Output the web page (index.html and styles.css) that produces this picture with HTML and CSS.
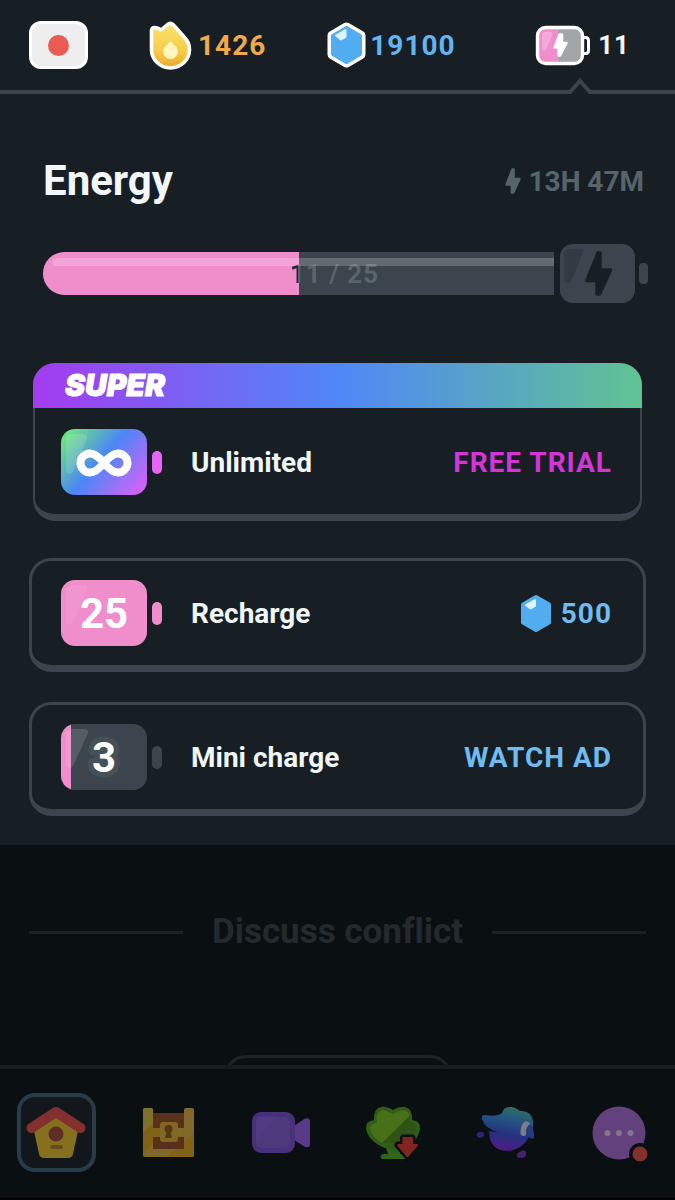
FILE: index.html
```
<!DOCTYPE html>
<html lang="en">
  <head>
    <title>Energy</title>
    <meta charset="utf-8"/>
    <meta name="viewport" content="width=device-width, initial-scale=1.0"/>
    <link rel="stylesheet" href="styles.css">
  </head>
  <body>
    <header class="topbar">
      <button class="flag" aria-label="Japanese course"><span class="sun"></span></button>
      <button class="stat streak">
        <svg width="43" height="49" viewBox="0 0 43 49" aria-hidden="true">
          <defs>
            <linearGradient id="flame" x1="0" y1="0" x2="0" y2="1">
              <stop offset="0" stop-color="#fbe36b"/>
              <stop offset=".6" stop-color="#f6cd4c"/>
              <stop offset="1" stop-color="#e9a92f"/>
            </linearGradient>
          </defs>
          <path d="M2.500 10Q2.500 6.500 6 6.500Q9 6.500 12 9L18.500 3.500Q21.500 1 24.500 4L36 17Q40.500 22 40.500 28.500A19 18.500 0 0 1 2.500 28.500Z" fill="url(#flame)" stroke="#fff" stroke-width="3.600" stroke-linejoin="round"/>
          <path d="M21.500 20.500Q23 21 24.500 23.500Q29 26 29 30.500A7.500 7.500 0 0 1 14 30.500Q14 26 18.500 23.500Q20 21 21.500 20.500Z" fill="#fff6bd"/>
        </svg>
        1426
      </button>
      <button class="stat gems">
        <svg width="39" height="46" viewBox="0 0 39 46" aria-hidden="true">
          <path d="M19.500 5L34 13.500V32.500L19.500 41L5 32.500V13.500Z" fill="#fff" stroke="#fff" stroke-width="9" stroke-linejoin="round"/>
          <path d="M19.500 6L33 14V32L19.500 40L6 32V14Z" fill="#52adf0" stroke="#52adf0" stroke-width="4" stroke-linejoin="round"/>
          <path d="M9 13.500L18.500 8V15L14 17.500Z" fill="#dff3ff" stroke="#dff3ff" stroke-width="2" stroke-linejoin="round"/>
        </svg>
        19100
      </button>
      <button class="stat charge">
        <svg width="55" height="39" viewBox="0 0 55 39" aria-hidden="true">
          <path d="M46 11.500h3.500q3 0 3 3v10q0 3-3 3H46" fill="none" stroke="#fff" stroke-width="3"/>
          <rect x="1.500" y="1.500" width="45" height="36" rx="8" fill="#a2a6a6"/>
          <path d="M22 1.500H9.500a8 8 0 0 0-8 8v20a8 8 0 0 0 8 8H22Z" fill="#f08dcb"/>
          <path d="M6 9q0-3 3-3h6q2 0 1.500 2L11 22q-2 4-4 2q-1-1-1-2Z" fill="#f5a9da"/>
          <rect x="1.500" y="1.500" width="45" height="36" rx="8" fill="none" stroke="#fff" stroke-width="3.400"/>
          <path d="M23.500 8.500h2.500v8.500h4.500L24 29.500h-1.500V21.500H18.500Z" fill="#fff" stroke="#fff" stroke-width="2.500" stroke-linejoin="round"/>
        </svg>
        11
      </button>
      <svg class="caret" width="26" height="17" viewBox="0 0 26 17" aria-hidden="true">
        <path d="M2 16L13 4L24 16V17H2Z" fill="#171f25"/>
        <path d="M0 15H3L13 4L23 15H26" fill="none" stroke="#3c444b" stroke-width="4"/>
      </svg>
    </header>

    <main class="energy">
      <div class="heading">
        <h1>Energy</h1>
        <p class="timer">
          <svg width="16" height="26" viewBox="0 0 27 44" aria-hidden="true">
            <path d="M12.500 2.500h2v16h10L14 41.500h-2.500V28H2.500Z" fill="#56656b" stroke="#56656b" stroke-width="4" stroke-linejoin="round"/>
          </svg>
          13H 47M
        </p>
      </div>

      <div class="meter" role="progressbar" aria-label="Energy" aria-valuemin="0" aria-valuemax="25" aria-valuenow="11">
        <div class="track">
          <div class="fill"></div>
          <span class="count">11 / 25</span>
          <div class="shine"></div>
        </div>
        <svg width="88" height="59" viewBox="0 0 88 59" aria-hidden="true">
          <rect x="0" y="0" width="75" height="59" rx="13" fill="#3c454d"/>
          <path d="M4 10q0-5 5-5h12q3 0 2 3L12 36q-2 5-6 3q-2-1-2-3Z" fill="#323b43"/>
          <path d="M38 9h2v17h10.500L39.500 50H37V36.500H27Z" fill="#171f25" stroke="#171f25" stroke-width="3.500" stroke-linejoin="round"/>
          <rect x="79" y="19" width="9" height="21" rx="4" fill="#3c454d"/>
        </svg>
      </div>

      <div class="offers">
        <button class="offer super">
          <span class="banner">SUPER</span>
          <span class="row">
            <svg width="101" height="66" viewBox="0 0 101 66" aria-hidden="true">
              <defs>
                <linearGradient id="unlimited" gradientUnits="userSpaceOnUse" x1="8" y1="4" x2="78" y2="64">
                  <stop offset="0" stop-color="#6ce283"/>
                  <stop offset=".45" stop-color="#4b87f6"/>
                  <stop offset="1" stop-color="#d462f6"/>
                </linearGradient>
              </defs>
              <rect width="86" height="66" rx="14" fill="url(#unlimited)"/>
              <path d="M5 11q0-6 6-6h11q5 0 4 5L13 40q-2 5-5 5q-3 0-3-4Z" fill="#fff" opacity=".14"/>
              <path d="M43 34C38 28 34 24.500 29 24.500a9.500 9.500 0 0 0 0 19C34 43.500 38 40 43 34C48 28 52 24.500 57 24.500a9.500 9.500 0 0 1 0 19C52 43.500 48 40 43 34Z" fill="none" stroke="#fff" stroke-width="8" stroke-linejoin="round"/>
              <rect x="91" y="22" width="10" height="23" rx="5" fill="#e765f5"/>
            </svg>
            <span class="name">Unlimited</span>
            <span class="price trial">FREE TRIAL</span>
          </span>
        </button>

        <button class="offer">
          <span class="row">
            <svg width="101" height="66" viewBox="0 0 101 66" aria-hidden="true">
              <rect width="86" height="66" rx="14" fill="#f08dcb"/>
              <path d="M5 11q0-6 6-6h11q5 0 4 5L13 40q-2 5-5 5q-3 0-3-4Z" fill="#fff" opacity=".08"/>
              <text class="amount" x="43" y="48">25</text>
              <rect x="91" y="22" width="10" height="23" rx="5" fill="#f08dcb"/>
            </svg>
            <span class="name">Recharge</span>
            <span class="price">
              <svg width="30" height="37" viewBox="0 0 30 37" aria-hidden="true">
                <path d="M15 2L28 9.500V27.500L15 35L2 27.500V9.500Z" fill="#52adf0" stroke="#52adf0" stroke-width="4" stroke-linejoin="round"/>
                <path d="M5 10L14 5V11L9.500 13.500Z" fill="#dff3ff" stroke="#dff3ff" stroke-width="2" stroke-linejoin="round"/>
              </svg>
              500
            </span>
          </span>
        </button>

        <button class="offer">
          <span class="row">
            <svg width="101" height="66" viewBox="0 0 101 66" aria-hidden="true">
              <rect width="86" height="66" rx="14" fill="#3c454d"/>
              <path d="M10 .600A14 14 0 0 0 0 14V52A14 14 0 0 0 10 65.400Z" fill="#f08dcb"/>
              <path d="M5 11q0-6 6-6h12q5 0 4 4L13 40q-2 5-5 4q-3-1-3-4Z" fill="#fff" opacity=".13"/>
              <text class="amount halo" x="43" y="48">3</text>
              <rect x="91" y="22" width="10" height="23" rx="5" fill="#3c454d"/>
            </svg>
            <span class="name">Mini charge</span>
            <span class="price">WATCH AD</span>
          </span>
        </button>
      </div>
    </main>

    <section class="path">
      <h2>Discuss conflict</h2>
      <div class="bubble"></div>
    </section>

    <nav class="tabs">
      <a href="#learn" class="tab active" aria-label="Learn">
        <svg width="60" height="53" viewBox="0 0 60 53" aria-hidden="true">
          <path d="M30 9L52 25L47 48Q46 52 42 52H18Q14 52 13 48L8 25Z" fill="#85701e"/>
          <path d="M5.500 22L30 6L54.500 22" fill="none" stroke="#84302f" stroke-width="10" stroke-linecap="round" stroke-linejoin="round"/>
          <circle cx="30" cy="28" r="7.500" fill="#5c3029"/>
          <rect x="24" y="39" width="13" height="4" rx="2" fill="#684b1e"/>
        </svg>
      </a>
      <a href="#quests" class="tab" aria-label="Quests">
        <svg width="51" height="49" viewBox="0 0 51 49" aria-hidden="true">
          <rect x="8" y="5" width="35" height="38" fill="#593019"/>
          <path d="M0 2q0-2 2-2h6q2 0 2 2v18h31V2q0-2 2-2h6q2 0 2 2v45q0 2-2 2H2q-2 0-2-2ZM10 29v12h31V29Z" fill="#80692b" fill-rule="evenodd"/>
          <path d="M0 25L10 15V20H17V29H10V36L0 46ZM24 49L32 41H41V34L51 24V47q0 2-2 2Z" fill="#806318"/>
          <path d="M0 2q0-2 2-2h6q2 0 2 2v13L0 25Z" fill="#80702d"/>
          <rect x="17" y="14" width="18" height="20" rx="3" fill="#816720"/>
          <circle cx="25.500" cy="21" r="4" fill="#563719"/>
          <path d="M24 22h3l2 8h-7Z" fill="#563719"/>
        </svg>
      </a>
      <a href="#video" class="tab" aria-label="Video call">
        <svg width="59" height="41" viewBox="0 0 59 41" aria-hidden="true">
          <path d="M42 14L53 6.500q5-1.500 5 3V32q0 4-5 3L42 28Z" fill="#573b87"/>
          <rect width="43" height="41" rx="9" fill="#48307b"/>
          <rect x="4" y="5" width="34" height="31" rx="5" fill="#4e397d"/>
          <path d="M9 5H26L4 28V10q0-5 5-5Z" fill="#533b84"/>
        </svg>
      </a>
      <a href="#leagues" class="tab" aria-label="Leagues">
        <svg width="56" height="54" viewBox="0 0 56 54" aria-hidden="true">
          <path d="M20 42H34V48H37Q40 48 40 51V53H17Q14 53 15 49Q16 48 18 48H22Z" fill="#2e6519"/>
          <path d="M8 14Q7 3 15 1Q20 0 27 4Q34 0 39 1Q47 3 46 14Q55 15 54 23Q51 38 35 43Q29 45 22 43Q3 37 0 23Q-1 15 8 14Z" fill="#2f5c17"/>
          <path d="M11 17Q9 7 15 4.500Q19 3 27 8Q35 3 39 4.500Q45 7 43 17Q51 18 50 23Q47 33 39 37L16 37Q5 31 4 22Q4 18 11 17Z" fill="#2e5315"/>
          <path d="M11 17Q9 7 15 4.500Q19 3 27 8Q35 3 39 4.500Q43 6 43.500 10L16 37Q5 31 4 22Q4 18 11 17Z" fill="#477019"/>
          <path d="M37.500 32h8.500v7h5L41.500 50L32 39h5.500Z" fill="#822521" stroke="#090e11" stroke-width="7" stroke-linejoin="round"/>
          <path d="M37.500 32h8.500v7h5L41.500 50L32 39h5.500Z" fill="#822521" stroke="#822521" stroke-width="2" stroke-linejoin="round"/>
        </svg>
      </a>
      <a href="#super" class="tab" aria-label="Super">
        <svg width="60" height="54" viewBox="0 0 60 54" aria-hidden="true">
          <defs>
            <linearGradient id="bird" gradientUnits="userSpaceOnUse" x1="38" y1="0" x2="28" y2="50">
              <stop offset="0" stop-color="#31705b"/>
              <stop offset=".28" stop-color="#235583"/>
              <stop offset=".58" stop-color="#263080"/>
              <stop offset=".85" stop-color="#4c1e82"/>
            </linearGradient>
          </defs>
          <path d="M9 9Q21 11 26 7Q28 0 35 1Q39 1 44 5Q55 4 57 15V24Q58 26 58 32Q55 34 53 31Q46 44 31 45Q13 44 13 25L22 26Q9 23 6 13Q5 9 9 9Z" fill="url(#bird)"/>
          <path d="M55 18Q48 11 45 22Q43 31 48 30Q51 30 50 25Q50 20 55 18Z" fill="#767f89"/>
          <path d="M54 18Q50 21 51 30Q57 27 57 22Z" fill="#293a7d"/>
          <path d="M3 26H7Q9 28 8 30Q6 32 3 32Q-2 29 3 26Z" fill="#332078"/>
          <path d="M42 47Q48 42 50 46Q51 52 45 52Q38 52 42 47Z" fill="#471f6e"/>
        </svg>
      </a>
      <a href="#more" class="tab" aria-label="More">
        <svg width="58" height="58" viewBox="0 0 58 58" aria-hidden="true">
          <circle cx="29" cy="29" r="26.500" fill="#63417c"/>
          <circle cx="17.500" cy="29" r="3" fill="#84758e"/>
          <circle cx="29" cy="29" r="3" fill="#84758e"/>
          <circle cx="40.500" cy="29" r="3" fill="#84758e"/>
          <circle cx="50" cy="50" r="11" fill="#090e11"/>
          <circle cx="50" cy="50" r="7.500" fill="#83312f"/>
        </svg>
      </a>
    </nav>
  </body>
</html>
```
FILE: styles.css
```
*, *::before, *::after {
  box-sizing: border-box;
}
body {
  background: #0a0f12;
  color: #f1f7fb;
  display: flex;
  flex-direction: column;
  font-family: Roboto, "Liberation Sans", sans-serif;
  font-size: 28px;
  font-variant-ligatures: none;
  font-weight: 700;
  margin: 0;
  min-height: 100vh;
}
h1, h2, p {
  margin: 0;
}
button {
  background: transparent;
  border: 0;
  color: inherit;
  cursor: pointer;
  font: inherit;
  padding: 0;
}
svg {
  display: block;
  flex: none;
  overflow: visible;
}

.topbar {
  align-items: center;
  background: #171f25;
  border-bottom: 4px solid #3c444b;
  display: flex;
  gap: 61px;
  height: 94px;
  padding: 0 45px 0 29px;
  position: relative;
}
.flag {
  align-items: center;
  background: #eee;
  border: 3px solid #fff;
  border-radius: 12px;
  display: flex;
  height: 48px;
  justify-content: center;
  width: 59px;
}
.sun {
  background: #ea5b54;
  border-radius: 50%;
  height: 21px;
  width: 21px;
}
.stat {
  align-items: center;
  display: flex;
  letter-spacing: 1px;
}
.streak {
  color: #f2ab48;
  gap: 6px;
}
.gems {
  color: #62b5f0;
  gap: 4px;
}
.charge {
  font-size: 26px;
  gap: 7px;
  margin-left: auto;
}
.caret {
  bottom: -4px;
  position: absolute;
  right: 82px;
}

.energy {
  background: #171f25;
  padding: 62px 29px 29px;
}
.heading {
  align-items: center;
  display: flex;
  justify-content: space-between;
  padding: 0 2px 0 14px;
}
h1 {
  font-size: 42px;
  line-height: 50px;
}
.timer {
  align-items: center;
  color: #56656b;
  display: flex;
  gap: 8px;
}

.meter {
  align-items: center;
  display: flex;
  gap: 6px;
  margin: 38px -2px 60px 14px;
}
.track {
  background: #3c454d;
  border-radius: 22px 0 0 22px;
  flex: 1;
  height: 43px;
  overflow: hidden;
  position: relative;
}
.fill {
  background: #f08dcb;
  height: 100%;
  width: 50%;
}
/* the label changes colour where the fill ends */
.count {
  background: linear-gradient(to right, #29232f 50%, #58656b 50%);
  -webkit-background-clip: text;
  background-clip: text;
  color: transparent;
  font-size: 26px;
  inset: 0;
  letter-spacing: 1px;
  line-height: 45px;
  padding-left: 72px;
  position: absolute;
  text-align: center;
}
.shine {
  background: #fff;
  border-radius: 4px 0 0 4px;
  height: 8px;
  left: 9px;
  opacity: 0.2;
  position: absolute;
  right: 0;
  top: 6px;
}

.offers {
  display: flex;
  flex-direction: column;
  gap: 30px;
}
.offer {
  border: 3px solid #3c454d;
  border-bottom-width: 7px;
  border-radius: 22px;
  text-align: left;
}
.row {
  align-items: center;
  display: flex;
  height: 104px;
  padding: 0 31px 0 29px;
}
.name {
  flex: 1;
  padding-left: 29px;
}
.price {
  align-items: center;
  color: #6fbcf2;
  display: flex;
  gap: 10px;
  letter-spacing: 1px;
}
.trial {
  color: #d335d6;
}
.amount {
  fill: #fff;
  font-size: 42px;
  text-anchor: middle;
}
.halo {
  paint-order: stroke;
  stroke: #465058;
  stroke-linejoin: round;
  stroke-width: 11px;
}
.super {
  border-width: 0 2px 7px;
  margin: 0 4px 7px;
}
.super .row {
  height: 106px;
  padding: 2px 28px 0 26px;
}
.banner {
  background: linear-gradient(to right, #a43cf0, #5087f8 50%, #60c392);
  border-radius: 22px 22px 0 0;
  color: #fff;
  display: block;
  font-family: Inter, sans-serif;
  font-size: 30px;
  font-style: italic;
  font-weight: 900;
  line-height: 45px;
  margin: 0 -2px;
  padding-left: 32px;
  -webkit-text-stroke: 1px #fff;
}

.path {
  color: #24292e;
  display: flex;
  flex: 1;
  flex-direction: column;
  justify-content: space-between;
  min-height: 220px;
  overflow: hidden;
  padding: 66px 29px 0;
}
h2 {
  align-items: center;
  display: flex;
  font-size: 35px;
  gap: 29px;
  line-height: 42px;
}
h2::before, h2::after {
  background: #1b2024;
  content: "";
  flex: 1;
  height: 3px;
}
/* only the top edge shows above the tabs */
.bubble {
  align-self: center;
  border: 3px solid #1e2327;
  border-radius: 22px;
  flex: none;
  height: 60px;
  margin-bottom: -50px;
  width: 228px;
}

.tabs {
  border-bottom: 2px solid #000;
  border-top: 4px solid #171c20;
  display: flex;
  height: 135px;
  padding-bottom: 2px;
}
.tab {
  align-items: center;
  display: flex;
  flex: 1;
  justify-content: center;
}
.active::before {
  background: #12171b;
  border: 4px solid #263c49;
  border-radius: 18px;
  content: "";
  height: 79px;
  position: absolute;
  width: 79px;
}
.active svg {
  position: relative;
}
```
